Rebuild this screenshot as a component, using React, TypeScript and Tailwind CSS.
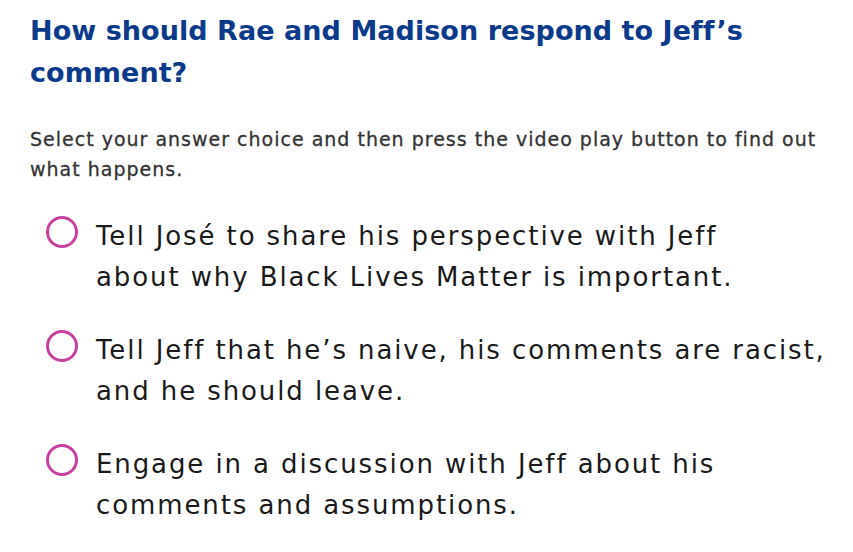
import React from "react";

const options = [
  ["Tell José to share his perspective with Jeff", "about why Black Lives Matter is important."],
  ["Tell Jeff that he’s naive, his comments are racist,", "and he should leave."],
  ["Engage in a discussion with Jeff about his", "comments and assumptions."],
];

export default function App() {
  return (
    <div className="w-[853px] h-[552px] bg-white pl-[30px] pt-[10px]" style={{ fontFamily: "'DejaVu Sans', sans-serif" }}>
      <h1 className="text-[27px] leading-[42px] font-bold text-[#0b3a8a] tracking-[0.05px] whitespace-nowrap">
        How should Rae and Madison respond to Jeff’s
        <br />
        comment?
      </h1>
      <p className="mt-[30px] text-[19px] leading-[30px] font-normal text-[#333333] tracking-[1px] [-webkit-text-stroke:0.3px_#333333] whitespace-nowrap">
        Select your answer choice and then press the video play button to find out
        <br />
        what happens.
      </p>
      <div className="mt-[32px] flex flex-col gap-[32px]">
        {options.map((o, i) => (
          <div key={i} className="flex items-start">
            <div className="ml-[16px] mt-[0px] w-[32px] h-[32px] rounded-full border-[3px] border-[#c8409f] shrink-0" />
            <div className="ml-[18px] text-[26px] leading-[41px] text-[#1a1a1a] tracking-[1.9px] whitespace-nowrap">
              {o[0]}
              <br />
              {o[1]}
            </div>
          </div>
        ))}
      </div>
    </div>
  );
}
